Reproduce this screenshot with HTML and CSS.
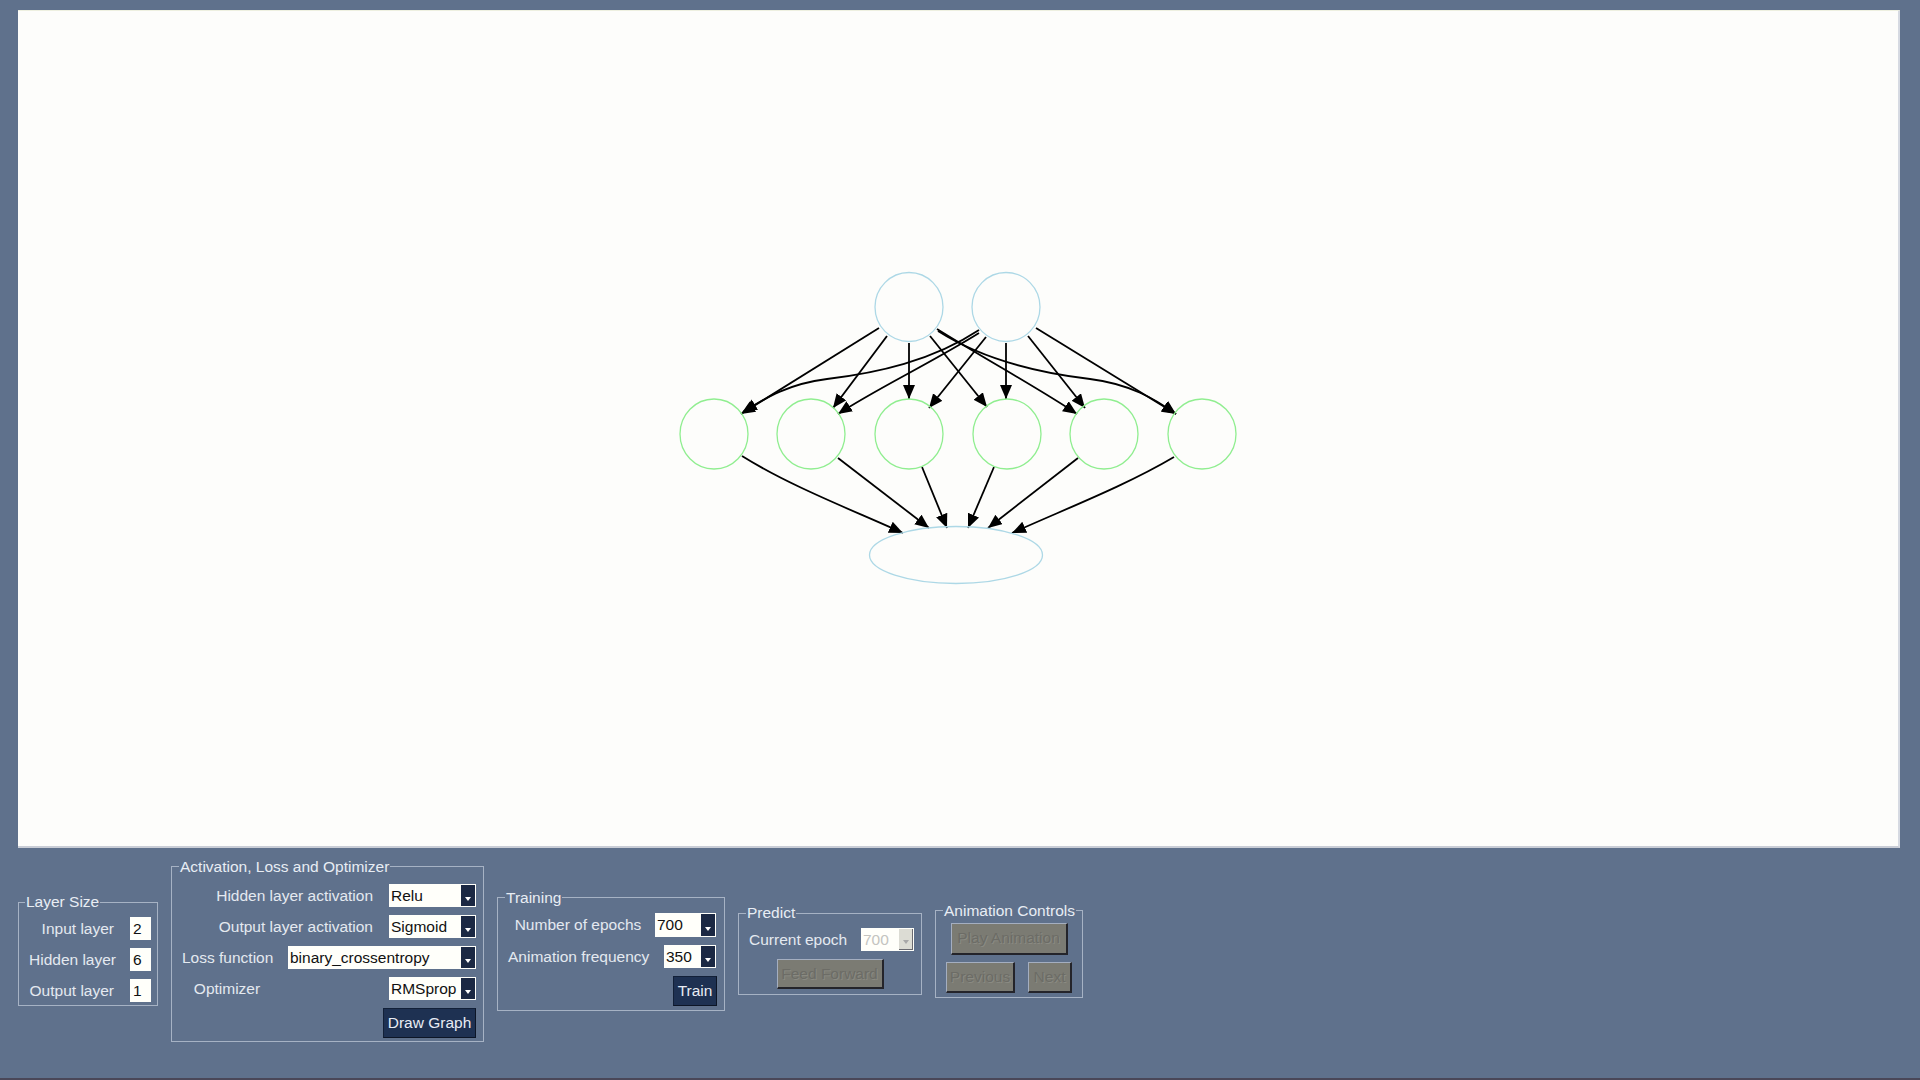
FILE: index.html
```html
<!DOCTYPE html>
<html>
<head>
<meta charset="utf-8">
<link rel="stylesheet" href="styles.css">
</head>
<body>
<div class="canvas">
  <svg class="graph" width="1882" height="838" viewBox="18 10 1882 838" xmlns="http://www.w3.org/2000/svg">
    <defs>
      <marker id="ah" markerUnits="userSpaceOnUse" markerWidth="16" markerHeight="14" refX="14" refY="6" orient="auto">
        <path d="M0,0 L14,6 L0,12 Z" fill="#000"/>
      </marker>
    </defs>
    <g class="edges" marker-end="url(#ah)">
      <path d="M879,327 L741,413"/>
      <path d="M887,335 L833,407"/>
      <path d="M909,342 L909,398"/>
      <path d="M930,335 L987,406"/>
      <path d="M937,328 C985,358 1040,388 1077,413"/>
      <path d="M938,330 C985,360 1040,372 1090,378 C1130,383 1155,398 1176,413"/>
      <path d="M979,329 C932,360 877,372 827,378 C787,383 764,398 743,411"/>
      <path d="M979,332 C931,362 876,388 838,413"/>
      <path d="M986,336 L929,407"/>
      <path d="M1006,342 L1006,398"/>
      <path d="M1028,335 L1085,407"/>
      <path d="M1036,327 L1176,413"/>
      <path d="M742,455 C790,485 850,508 903,532"/>
      <path d="M838,457 L929,527"/>
      <path d="M922,466 L947,527"/>
      <path d="M994,466 L968,527"/>
      <path d="M1078,457 L988,527"/>
      <path d="M1174,456 C1125,485 1065,508 1012,532"/>
    </g>
    <g class="in-nodes">
      <ellipse cx="909" cy="306" rx="34" ry="34.5"/>
      <ellipse cx="1006" cy="306" rx="34" ry="34.5"/>
      <ellipse cx="956" cy="554" rx="86.5" ry="28.5"/>
    </g>
    <g class="hid-nodes">
      <ellipse cx="714" cy="433" rx="34" ry="35"/>
      <ellipse cx="811" cy="433" rx="34" ry="35"/>
      <ellipse cx="909" cy="433" rx="34" ry="35"/>
      <ellipse cx="1007" cy="433" rx="34" ry="35"/>
      <ellipse cx="1104" cy="433" rx="34" ry="35"/>
      <ellipse cx="1202" cy="433" rx="34" ry="35"/>
    </g>
  </svg>
</div>

<div class="controls">
  <fieldset class="panel p-layer">
    <legend>Layer Size</legend>
    <div class="grid-layer">
      <span class="lbl">Input layer</span><span class="entry">2</span>
      <span class="lbl">Hidden layer</span><span class="entry">6</span>
      <span class="lbl">Output layer</span><span class="entry">1</span>
    </div>
  </fieldset>

  <fieldset class="panel p-act">
    <legend>Activation, Loss and Optimizer</legend>
    <div class="grid-act">
      <span class="lbl span-lbl">Hidden layer activation</span>
      <div class="combo c-act"><span class="val">Relu</span><span class="drop"><i></i></span></div>
      <span class="lbl span-lbl">Output layer activation</span>
      <div class="combo c-act"><span class="val">Sigmoid</span><span class="drop"><i></i></span></div>
      <span class="lbl left-lbl">Loss function</span>
      <div class="combo c-loss"><span class="val">binary_crossentropy</span><span class="drop"><i></i></span></div>
      <span class="lbl center-lbl">Optimizer</span>
      <div class="combo c-act"><span class="val">RMSprop</span><span class="drop"><i></i></span></div>
      <button class="btn b-draw">Draw Graph</button>
    </div>
  </fieldset>

  <fieldset class="panel p-train">
    <legend>Training</legend>
    <div class="grid-train">
      <span class="lbl center-lbl">Number of epochs</span>
      <div class="combo c-ep"><span class="val">700</span><span class="drop"><i></i></span></div>
      <span class="lbl center-lbl">Animation frequency</span>
      <div class="combo c-freq"><span class="val">350</span><span class="drop"><i></i></span></div>
      <button class="btn b-train">Train</button>
    </div>
  </fieldset>

  <fieldset class="panel p-pred">
    <legend>Predict</legend>
    <div class="grid-pred">
      <span class="lbl">Current epoch</span>
      <div class="combo c-cur disabled"><span class="val">700</span><span class="drop"><i></i></span></div>
      <button class="btn-off b-feed">Feed Forward</button>
    </div>
  </fieldset>

  <fieldset class="panel p-anim">
    <legend>Animation Controls</legend>
    <div class="grid-anim">
      <button class="btn-off b-play">Play Animation</button>
      <div class="anim-row">
        <button class="btn-off b-prev">Previous</button>
        <button class="btn-off b-next">Next</button>
      </div>
    </div>
  </fieldset>
</div>
<div class="footer"></div>
</body>
</html>
```

FILE: styles.css
```css
* { box-sizing: border-box; }

html, body {
  margin: 0;
  padding: 0;
  width: 1920px;
  height: 1080px;
  overflow: hidden;
}

body {
  background: #5f718c;
  font-family: "Liberation Sans", Arial, sans-serif;
  font-size: 15.5px;
  color: #e6ebf2;
  display: flex;
  flex-direction: column;
}

.canvas {
  margin: 10px 20px 0 18px;
  width: 1882px;
  height: 838px;
  background: #fdfdfb;
  border-right: 2px solid #d6dae2;
  border-bottom: 2px solid #c9cdd6;
  border-top: 1px solid #eef0e0;
  overflow: hidden;
  flex: none;
}

.graph {
  display: block;
}

.edges path {
  fill: none;
  stroke: #000;
  stroke-width: 1.8;
}

.in-nodes ellipse {
  fill: none;
  stroke: #add8e6;
  stroke-width: 1.3;
}

.hid-nodes ellipse {
  fill: none;
  stroke: #90ee90;
  stroke-width: 1.3;
}

.controls {
  flex: 1;
  display: flex;
  align-items: center;
  gap: 13px;
  padding: 0 0 26px 18px;
}

.footer {
  height: 2px;
  background: #4a4758;
  flex: none;
}

.panel {
  margin: 0;
  border: 1px solid #a6b2c4;
  padding: 0;
  min-width: 0;
}

.panel legend {
  font-size: 15.5px;
  line-height: 16px;
  padding: 0 1px;
  margin-left: -3px;
  white-space: nowrap;
  color: #e8edf4;
}

.lbl {
  line-height: 23px;
  white-space: nowrap;
  color: #e4e9f0;
}

/* Layer size */
.p-layer { width: 140px; padding: 7px 6px 3px 10px; }
.p-layer legend { margin-left: -4px; }
.grid-layer {
  display: grid;
  grid-template-columns: 85px 21px;
  column-gap: 16px;
  row-gap: 8px;
  grid-auto-rows: 23px;
}
.grid-layer .lbl { text-align: right; }

.entry {
  background: #fffffa;
  color: #111;
  height: 23px;
  line-height: 23px;
  padding-left: 3px;
}

/* Activation */
.p-act { width: 313px; padding: 9px 6px 3px 10px; }
.grid-act {
  display: grid;
  grid-template-columns: 90px 16px 85px 16px 87px;
  grid-template-rows: 23px 23px 23px 23px 30px;
  row-gap: 8px;
}
.span-lbl { grid-column: 1 / 4; text-align: right; }
.left-lbl { grid-column: 1 / 2; }
.center-lbl { text-align: center; }
.grid-act .center-lbl { grid-column: 1 / 2; }
.c-act { grid-column: 5 / 6; }
.c-loss { grid-column: 3 / 6; }
.b-draw { grid-column: 3 / 6; justify-self: end; width: 93px; height: 30px; }

/* combo */
.combo {
  display: flex;
  background: #fffffa;
  color: #111;
  height: 23px;
  padding: 1px 1px 1px 0;
}
.combo .val {
  flex: 1;
  line-height: 21px;
  padding-left: 2px;
  white-space: nowrap;
  overflow: hidden;
}
.combo .drop {
  width: 14px;
  background: #1b2843;
  position: relative;
  flex: none;
}
.combo .drop i {
  position: absolute;
  left: 4px;
  bottom: 5px;
  width: 0;
  height: 0;
  border-left: 3px solid transparent;
  border-right: 3px solid transparent;
  border-top: 4px solid #fff;
}
.combo.disabled { color: #c4c4c0; }
.combo.disabled .drop {
  background: #dcdcd4;
  border-right: 1px solid #6a6a70;
  border-bottom: 1px solid #6a6a70;
}
.combo.disabled .drop i { border-top-color: #a8a8a8; }

/* buttons */
.btn {
  font-family: "Liberation Sans", Arial, sans-serif;
  font-size: 15.5px;
  color: #e8ecf4;
  background: #1e3152;
  border: 1px solid #122038;
  border-right-color: #0c1526;
  border-bottom-color: #0c1526;
  padding: 0;
}

.btn-off {
  font-family: "Liberation Sans", Arial, sans-serif;
  font-size: 15.5px;
  color: #6c6c66;
  text-shadow: 1px 1px 0 #8a8a82;
  background: #7b7b73;
  border-top: 1px solid #a4aec0;
  border-left: 1px solid #a4aec0;
  border-right: 2px solid #24242a;
  border-bottom: 2px solid #24242a;
  padding: 0;
  white-space: nowrap;
}

/* Training */
.p-train { width: 228px; padding: 7px 8px 4px 10px; }
.grid-train {
  display: grid;
  grid-template-columns: 140px 68px;
  grid-template-rows: 24px 23px 30px;
  row-gap: 8px;
}
.grid-train .lbl { line-height: 24px; }
.c-ep { width: 61px; justify-self: end; height: 24px; }
.c-freq { width: 52px; justify-self: end; }
.b-train { grid-column: 2 / 3; justify-self: end; width: 44px; height: 30px; margin-right: -1px; }

/* Predict */
.p-pred { width: 184px; padding: 7px 7px 5px 10px; }
.grid-pred {
  display: grid;
  grid-template-columns: 96px 53px;
  column-gap: 16px;
  grid-template-rows: 23px 30px;
  row-gap: 8px;
}
.c-cur { width: 53px; }
.b-feed { grid-column: 1 / 3; justify-self: center; width: 107px; height: 30px; margin-left: -3px; }

/* Animation */
.p-anim { width: 148px; padding: 4px 10px 4px 10px; }
.grid-anim {
  display: flex;
  flex-direction: column;
  gap: 7px;
}
.b-play { width: 117px; height: 32px; align-self: center; }
.anim-row {
  display: flex;
  justify-content: space-between;
}
.b-prev { width: 69px; height: 31px; }
.b-next { width: 44px; height: 31px; }
```
